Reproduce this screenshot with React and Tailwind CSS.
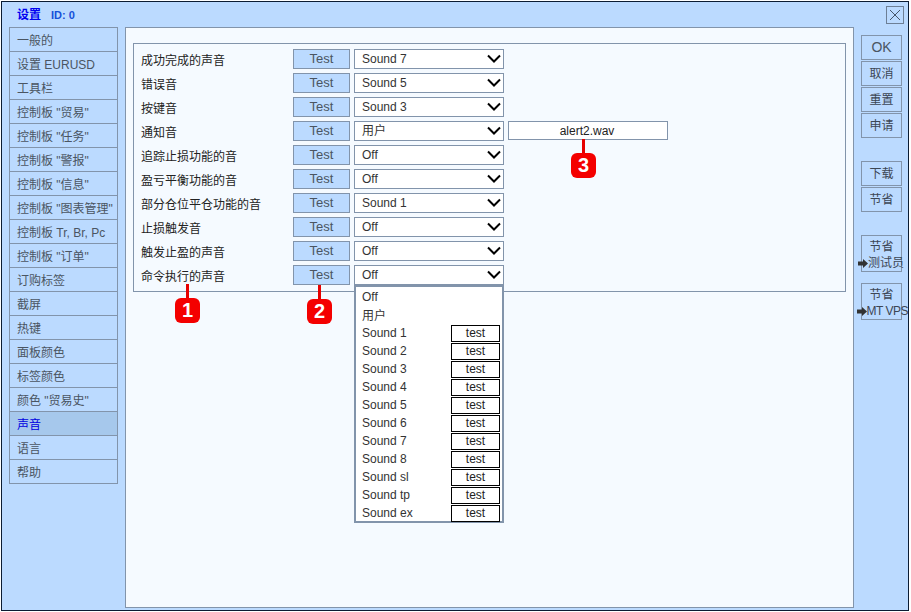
const nav = ['一般的','设置 EURUSD','工具栏','控制板 "贸易"','控制板 "任务"','控制板 "警报"','控制板 "信息"','控制板 "图表管理"','控制板 Tr, Br, Pc','控制板 "订单"','订购标签','截屏','热键','面板颜色','标签颜色','颜色 "贸易史"','声音','语言','帮助'];
const rows = [['成功完成的声音','Sound 7'],['错误音','Sound 5'],['按键音','Sound 3'],['通知音','用户'],['追踪止损功能的音','Off'],['盈亏平衡功能的音','Off'],['部分仓位平仓功能的音','Sound 1'],['止损触发音','Off'],['触发止盈的声音','Off'],['命令执行的声音','Off']];
const sounds = ['Sound 1','Sound 2','Sound 3','Sound 4','Sound 5','Sound 6','Sound 7','Sound 8','Sound sl','Sound tp','Sound ex'];

function Chevron() {
  return (
    <svg width="14" height="9" viewBox="0 0 14 9" className="shrink-0 mb-[2px]">
      <path d="M1 1.5 L7 7.5 L13 1.5" fill="none" stroke="#000" strokeWidth="2" />
    </svg>
  );
}

function Badge({ n, className }) {
  return (
    <div className={`absolute flex flex-col items-center ${className}`}>
      <div className="w-[3px] h-[14px] bg-[#e60000]" />
      <div className="w-[25px] h-[25px] rounded-[6px] bg-[#f40000] text-white font-bold text-[20px] leading-[25px] text-center">{n}</div>
    </div>
  );
}

function SideButton({ children, className = '' }) {
  return <div className={`w-[41px] h-[25px] border border-[#8294ab] flex items-center justify-center text-[#3c4654] ${className}`}>{children}</div>;
}

function SaveButton({ label, right, className = '' }) {
  return (
    <div className={`relative w-[41px] h-[37px] border border-[#8294ab] text-[#3c4654] flex flex-col items-center pt-[3px] leading-[17px] ${className}`}>
      <span>节省</span>
      <span className={`absolute top-[19px] flex items-center whitespace-nowrap ${right}`}>
        <svg width="10" height="9" viewBox="0 0 10 9" className="shrink-0"><path d="M0 2.5H5V0L10 4.5L5 9V6.5H0Z" fill="#333" /></svg>
        {label}
      </span>
    </div>
  );
}

export default function App() {
  return (
    <div className="w-[911px] h-[612px] bg-white p-px text-[12px] font-['Liberation_Sans','Noto_Sans_CJK_SC',sans-serif]">
      <div className="w-[908px] h-[610px] border border-[#0b1c33] bg-[#bbdaff] flex flex-col">
        <div className="h-[25px] shrink-0 flex items-center pl-[15px] pr-[4px] pt-px">
          <span className="text-[#0000f0] font-bold text-[12px]">设置</span>
          <span className="text-[#1650d8] font-bold text-[11px] ml-[10px]">ID: 0</span>
          <div className="ml-auto w-[18px] h-[18px] border border-[#6d7f96] flex items-center justify-center">
            <svg width="12" height="12" viewBox="0 0 12 12"><path d="M1 1L11 11M11 1L1 11" stroke="#46566b" strokeWidth="1" /></svg>
          </div>
        </div>
        <div className="flex flex-1 pl-[7px] pb-[2px] gap-[7px]">
          <div className="w-[109px] shrink-0">
            <div className="border border-[#8294ab] border-b-0 w-full">
              {nav.map((t) => (
                <div key={t} className={`h-[24px] border-b border-[#8294ab] pl-[7px] pt-[2px] flex items-center whitespace-nowrap ${t === '声音' ? 'bg-[#a6c8ec] text-[#0000e0]' : 'text-[#4a5562]'}`}>{t}</div>
              ))}
            </div>
          </div>
          <div className="w-[729px] shrink-0 border border-[#8294ab] bg-[#f5faff] pt-[15px] pl-[7px]">
            <div className="relative w-[713px] h-[249px] border border-[#8294ab] pt-[3px] pl-[7px]">
              {rows.map(([label, val], i) => (
                <div key={label} className="flex items-center h-[24px]">
                  <div className="w-[152px] shrink-0 text-[#222] whitespace-nowrap pt-[3px]">{label}</div>
                  <div className="w-[57px] h-[20px] shrink-0 border border-[#8294ab] bg-[#bbdaff] text-[13px] text-[#4a5562] pb-px flex items-center justify-center">Test</div>
                  <div className="relative ml-[4px] w-[150px] h-[20px] shrink-0 border border-[#8294ab] bg-white text-[#333] flex items-center justify-between pl-[7px] pr-[2px]">
                    <span>{val}</span>
                    <Chevron />
                    {i === 9 && (
                      <div className="absolute z-10 left-[-1px] top-[19px] w-[150px] h-[238px] border-2 border-[#8294ab] bg-white pl-[6px] pr-[2px] pt-px">
                        <div className="h-[18px] flex items-center">Off</div>
                        <div className="h-[18px] pt-px flex items-center">用户</div>
                        {sounds.map((s) => (
                          <div key={s} className="h-[18px] flex items-center justify-between">
                            <span>{s}</span>
                            <span className="w-[49px] h-[17px] border border-black text-[#222] flex items-center justify-center">test</span>
                          </div>
                        ))}
                      </div>
                    )}
                  </div>
                  {i === 3 && (
                    <div className="ml-[4px] mb-px w-[160px] h-[19px] border border-[#8294ab] bg-white text-[#222] flex items-center justify-center pr-[2px]">alert2.wav</div>
                  )}
                </div>
              ))}
              <Badge n="1" className="left-[41px] top-[240px]" />
              <Badge n="2" className="left-[173px] top-[241px]" />
              <Badge n="3" className="left-[437px] top-[95px]" />
            </div>
          </div>
          <div className="w-[41px] shrink-0 pt-[8px] flex flex-col">
            <SideButton className="text-[14px] text-[#4a5562]">OK</SideButton>
            <SideButton className="mt-px">取消</SideButton>
            <SideButton className="mt-px">重置</SideButton>
            <SideButton className="mt-px">申请</SideButton>
            <SideButton className="mt-[23px]">下载</SideButton>
            <SideButton className="mt-px">节省</SideButton>
            <SaveButton label="测试员" right="right-[-3px]" className="mt-[23px]" />
            <SaveButton label="MT VPS" right="right-[-7px] tracking-[-0.5px]" className="mt-[11px]" />
          </div>
        </div>
      </div>
    </div>
  );
}
